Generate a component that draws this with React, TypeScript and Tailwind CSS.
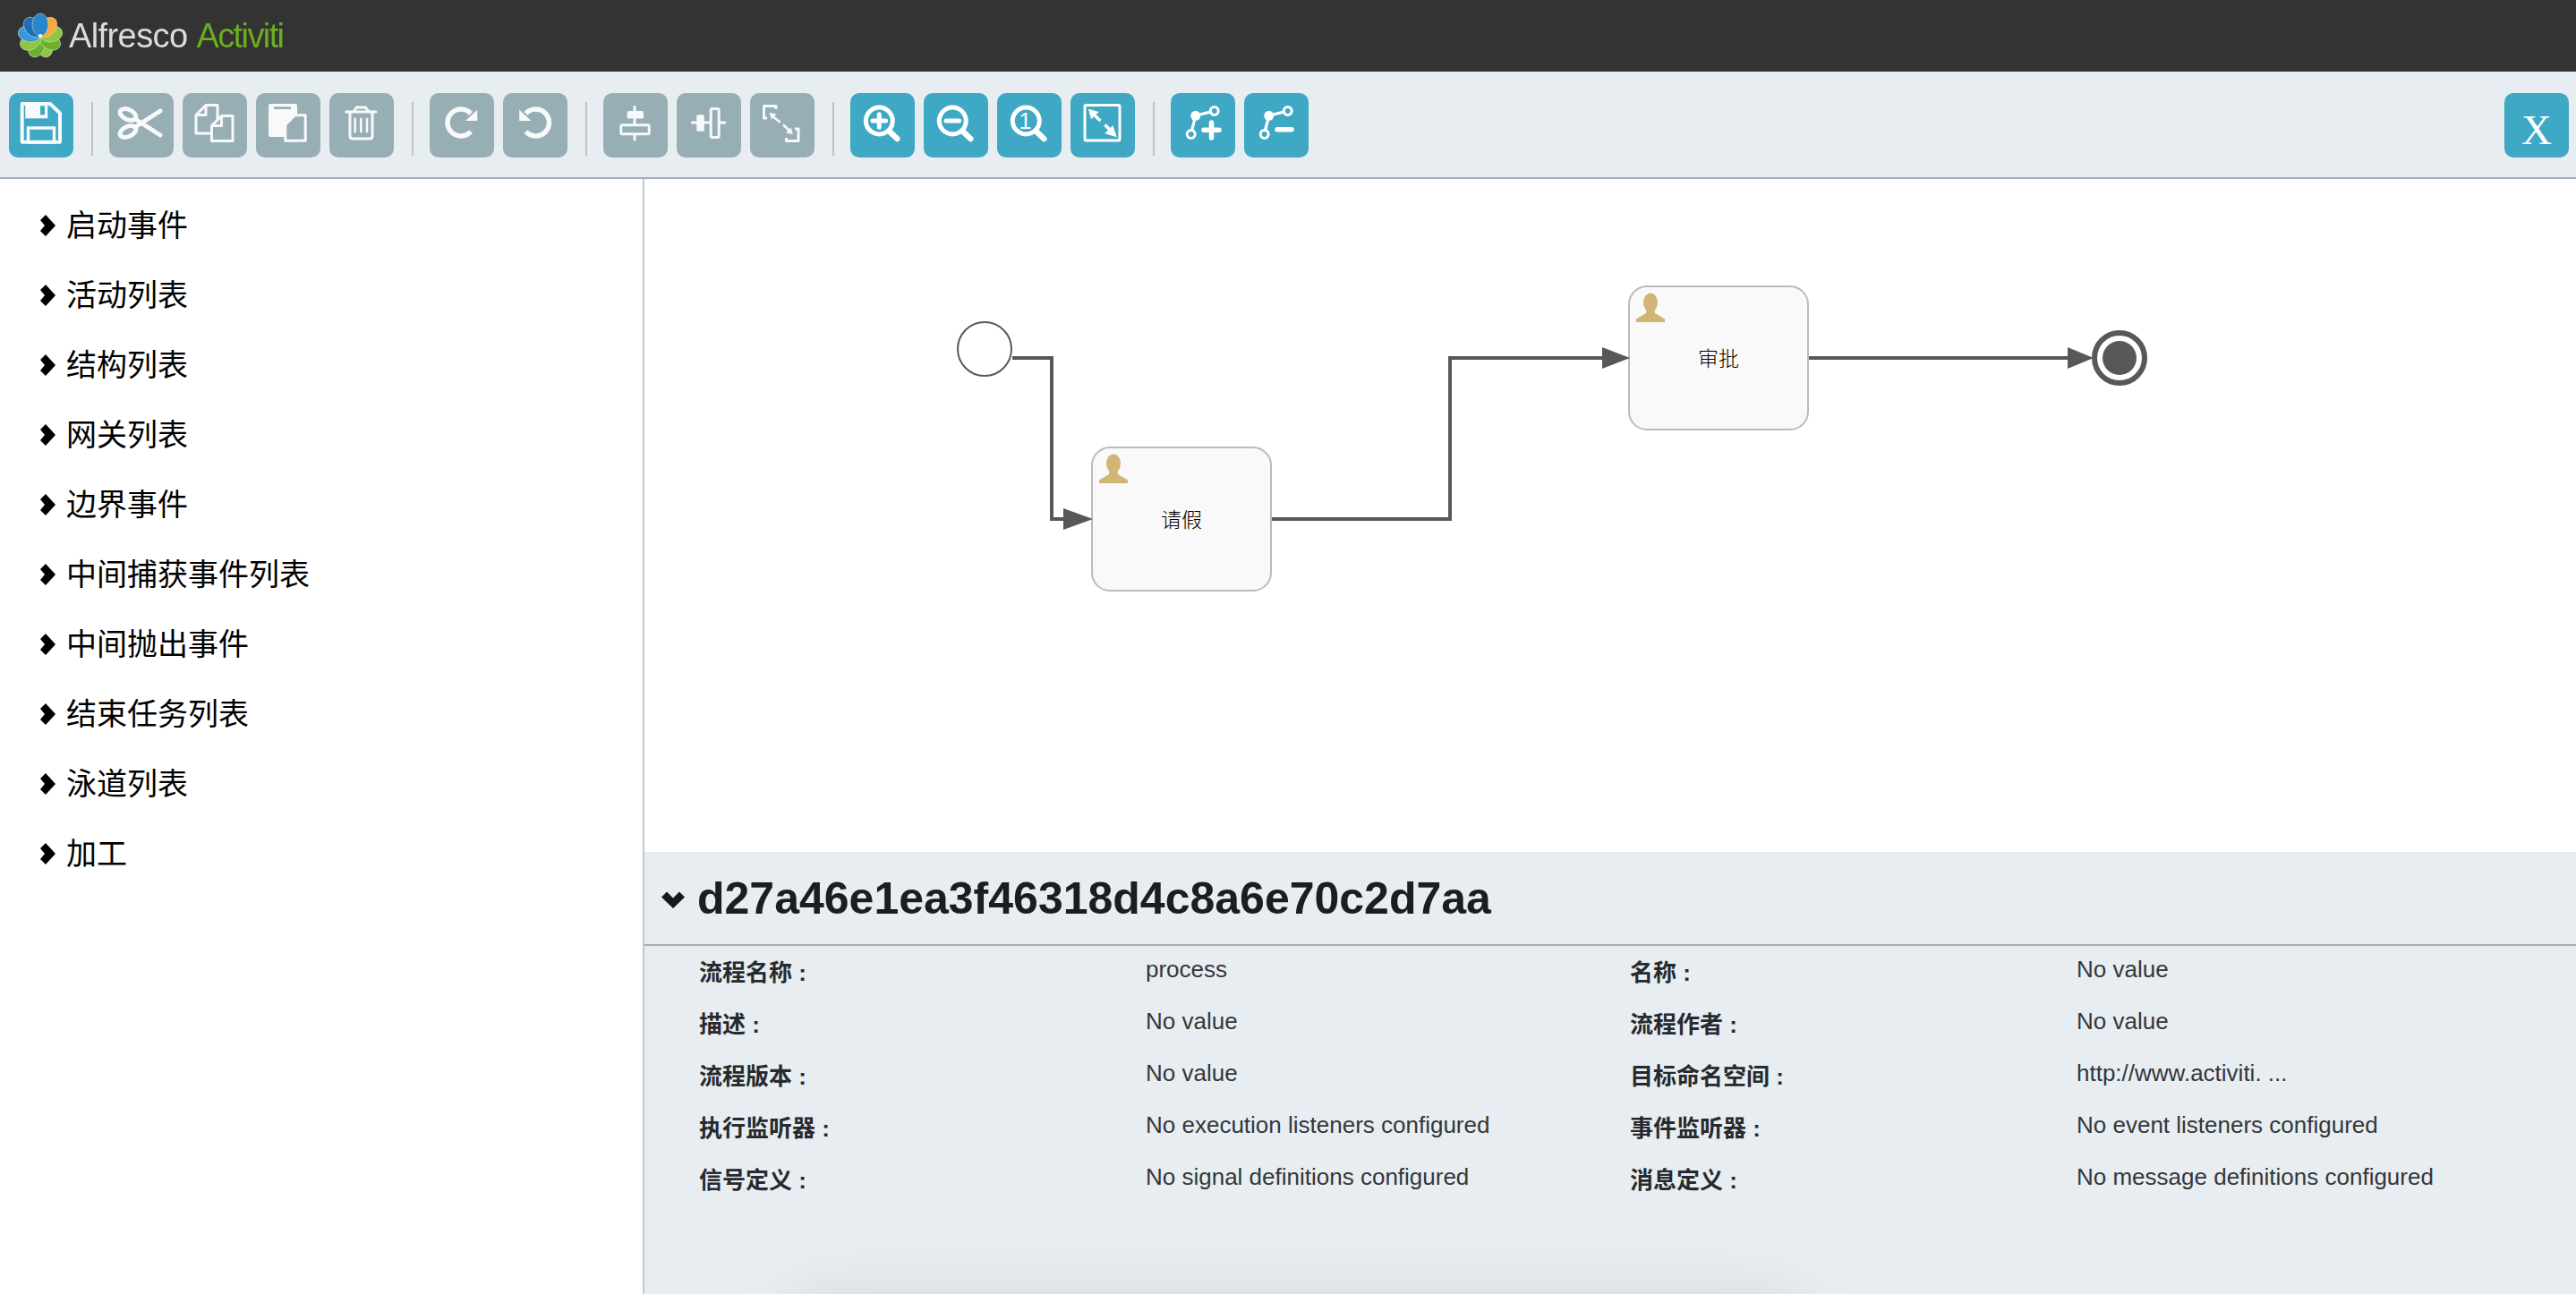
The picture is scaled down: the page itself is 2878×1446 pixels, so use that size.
import React from 'react';

const W = '#f7f9fb';
const BG = '#97aeb4';
const BLUE = '#3fa8c4';

const Btn: React.FC<{ blue?: boolean; children: React.ReactNode }> = ({ blue, children }) => (
  <button className={`w-[72px] h-[72px] shrink-0 rounded-[10px] ${blue ? 'bg-[#3fa8c4]' : 'bg-[#97aeb4]'}`}>
    <svg viewBox="0 0 72 72" className="w-[72px] h-[72px] block">
      {children}
    </svg>
  </button>
);

const Sep = () => <div className="w-[2px] h-[60px] mt-[10px] ml-5 mr-[18px] bg-[#bcc2cd] shrink-0" />;

const Glass = ({ children }: { children?: React.ReactNode }) => (
  <g>
    <circle cx="32.3" cy="31" r="15" fill="none" stroke="white" strokeWidth="5" />
    <path d="M43.5 42.7L52.3 51" stroke="white" strokeWidth="6.5" strokeLinecap="round" />
    {children}
  </g>
);

const Bend = ({ children }: { children: React.ReactNode }) => (
  <g>
    <path d="M27.7 25.3L46 20.6M27.7 25.3L23.2 43" stroke="white" strokeWidth="3.2" />
    <circle cx="27.7" cy="25.3" r="5.5" fill="white" />
    <circle cx="48.7" cy="20" r="4.5" fill="none" stroke="white" strokeWidth="3" />
    <circle cx="22.7" cy="46" r="4.5" fill="none" stroke="white" strokeWidth="3" />
    {children}
  </g>
);

const Logo = () => {
  const petals = [
    { a: 160, c: '#8ec63f' },
    { a: 200, c: '#6ab02e' },
    { a: 120, c: '#6ab02e' },
    { a: 240, c: '#8ec63f' },
    { a: 80, c: '#8ec63f' },
    { a: 40, c: '#f7a93b' },
    { a: 280, c: '#3a9ad9' },
    { a: 320, c: '#1f6db5' },
    { a: 0, c: '#2a86cc' },
  ];
  return (
    <svg viewBox="0 0 52 52" className="w-[52px] h-[52px] shrink-0">
      {petals.map((p, i) => (
        <ellipse key={i} cx="26" cy="13.5" rx="9" ry="12.5" fill={p.c} stroke="#dfe9e4" strokeWidth="0.5" transform={`rotate(${p.a} 26 26)`} />
      ))}
      <circle cx="26" cy="26" r="2" fill="white" />
    </svg>
  );
};

const Chevron = () => (
  <svg viewBox="0 0 17 24" className="w-[17px] h-[24px] shrink-0">
    <path d="M0 6L6 0L17 12L6 24L0 18L5 12Z" fill="#000" />
  </svg>
);

const User = ({ x, y }: { x: number; y: number }) => (
  <g transform={`translate(${x} ${y})`} fill="#d1b574">
    <ellipse cx="24" cy="18" rx="8" ry="10.5" />
    <polygon points="8,40 8,36.5 19,30 20,24 28,24 29,30 40,36.5 40,40" />
  </g>
);

const groups = ['启动事件', '活动列表', '结构列表', '网关列表', '边界事件', '中间捕获事件列表', '中间抛出事件', '结束任务列表', '泳道列表', '加工'];

const props = [
  ['流程名称 :', 'process', '名称 :', 'No value'],
  ['描述 :', 'No value', '流程作者 :', 'No value'],
  ['流程版本 :', 'No value', '目标命名空间 :', 'http://www.activiti. ...'],
  ['执行监听器 :', 'No execution listeners configured', '事件监听器 :', 'No event listeners configured'],
  ['信号定义 :', 'No signal definitions configured', '消息定义 :', 'No message definitions configured'],
];

export default function App() {
  return (
    <div className="w-[2878px] h-[1446px] overflow-hidden flex flex-col bg-white font-['Liberation_Sans','Noto_Sans_CJK_SC',sans-serif]">
      <div className="h-[80px] shrink-0 bg-[#333333] flex items-center pl-[19px]">
        <div className="flex items-center blur-[0.6px]">
          <Logo />
          <span className="ml-[6px] text-[38px] tracking-[-0.6px] text-[#dcdcdc]">Alfresco</span>
          <span className="ml-[10px] text-[38px] tracking-[-1.6px] text-[#6cae1f]">Activiti</span>
        </div>
      </div>

      <div className="h-[120px] shrink-0 bg-[#e8edf1] border-b-2 border-[#a5aeb9] flex items-start pt-6 pl-[10px] pr-2">
        <Btn blue>
          <path d="M14.7 12H46L57 22.5V54.7H14.7Z" fill="none" stroke={W} strokeWidth="4" strokeLinejoin="round" />
          <rect x="18.3" y="10" width="25" height="18.3" fill={W} />
          <rect x="35" y="14.3" width="5" height="10" fill={BLUE} />
          <rect x="21.5" y="39" width="29" height="16" fill="none" stroke={W} strokeWidth="3.5" />
        </Btn>
        <Sep />
        <div className="flex gap-[10px]">
          <Btn>
            <g fill="none" stroke={W}>
              <ellipse cx="21" cy="24" rx="9.5" ry="5.5" strokeWidth="5" transform="rotate(25 21 24)" />
              <ellipse cx="21" cy="43" rx="9.5" ry="5.5" strokeWidth="5" transform="rotate(-25 21 43)" />
              <path d="M29 29L57 47M29 38L57 20" strokeWidth="5" strokeLinecap="round" />
            </g>
          </Btn>
          <Btn>
            <g fill={BG} stroke={W} strokeWidth="3" strokeLinejoin="round">
              <path d="M26 13.5H39V45H15V24.5Z" />
              <path d="M26 13.5V24.5H15" fill="none" />
              <path d="M43.5 25.5H56V53.5H32.5V36.5Z" />
              <path d="M43.5 25.5V36.5H32.5" fill="none" />
            </g>
          </Btn>
          <Btn>
            <rect x="14" y="12" width="32" height="37" rx="2" fill={W} />
            <rect x="20" y="15.3" width="19" height="2.7" fill={BG} />
            <path d="M43.5 24.8H55.2V53.2H32.8V35.5Z" fill={BG} stroke={W} strokeWidth="3" strokeLinejoin="round" />
          </Btn>
          <Btn>
            <g fill="none" stroke={W} strokeWidth="3" strokeLinejoin="round">
              <path d="M18.7 21H52" strokeLinecap="round" />
              <path d="M27 21L30.3 16H40.3L44.3 21" />
              <path d="M23 21V48C23 50 24 51 26 51H45C47 51 48 50 48 48V21" />
              <path d="M28.7 27.7V44.3M35.3 27.7V44.3M42 27.7V44.3" strokeWidth="2.6" />
            </g>
          </Btn>
        </div>
        <Sep />
        <div className="flex gap-[10px]">
          <Btn>
            <path d="M46 22.8A15 15 0 1 0 46 43.2" fill="none" stroke={W} strokeWidth="5.5" />
            <polygon points="53.3,18.7 53.3,31 40,31" fill={W} />
          </Btn>
          <Btn>
            <g transform="translate(71.5 0) scale(-1 1)">
              <path d="M46 22.8A15 15 0 1 0 46 43.2" fill="none" stroke={W} strokeWidth="5.5" />
              <polygon points="53.3,18.7 53.3,31 40,31" fill={W} />
            </g>
          </Btn>
        </div>
        <Sep />
        <div className="flex gap-[10px]">
          <Btn>
            <path d="M35 15.3V52" stroke={W} strokeWidth="3" strokeLinecap="round" />
            <rect x="26.7" y="20" width="18.3" height="8.5" rx="1.5" fill={W} />
            <rect x="19.8" y="35.8" width="31.4" height="10" rx="1.5" fill={BG} stroke={W} strokeWidth="3" />
          </Btn>
          <Btn>
            <path d="M17.3 33H54" stroke={W} strokeWidth="3" strokeLinecap="round" />
            <rect x="22.3" y="24.3" width="8.5" height="18.4" rx="1.5" fill={W} />
            <rect x="38.2" y="17.5" width="9" height="32" rx="1.5" fill={BG} stroke={W} strokeWidth="3" />
          </Btn>
          <Btn>
            <g fill="none" stroke={W} strokeWidth="3" strokeLinejoin="round">
              <path d="M29 18V14.5H15.5V28H19" />
              <path d="M40.5 50V53.5H54V40H50" />
              <path d="M26 26.5L33.7 32.7M37 35.3L44 42" strokeWidth="2.6" />
            </g>
            <polygon points="21.5,22 29.5,23.5 24,29.5" fill={W} />
            <polygon points="48,46 40,44.5 45.5,38.5" fill={W} />
          </Btn>
        </div>
        <Sep />
        <div className="flex gap-[10px]">
          <Btn blue>
            <Glass>
              <path d="M25 31H39.6M32.3 23.7V38.3" stroke="white" strokeWidth="5" strokeLinecap="round" />
            </Glass>
          </Btn>
          <Btn blue>
            <Glass>
              <path d="M25 31H39.6" stroke="white" strokeWidth="5" strokeLinecap="round" />
            </Glass>
          </Btn>
          <Btn blue>
            <Glass>
              <text x="31.5" y="40" fontSize="25" fill="white" textAnchor="middle">1</text>
            </Glass>
          </Btn>
          <Btn blue>
            <rect x="16" y="13.5" width="39" height="39.5" rx="1.5" fill="none" stroke="white" strokeWidth="3" />
            <polygon points="20,17.7 31.7,21 23,29.3" fill="white" />
            <polygon points="51.7,49.3 38.3,45.3 47.3,36" fill="white" />
            <path d="M26 24L33.5 31M38.5 35.5L45 42" stroke="white" strokeWidth="3.5" />
          </Btn>
        </div>
        <Sep />
        <div className="flex gap-[10px]">
          <Btn blue>
            <Bend>
              <path d="M37 41.3H54M45.5 33V50" stroke="white" strokeWidth="5.5" strokeLinecap="round" />
            </Bend>
          </Btn>
          <Btn blue>
            <Bend>
              <path d="M37 40.7H53" stroke="white" strokeWidth="5.5" strokeLinecap="round" />
            </Bend>
          </Btn>
        </div>
        <button className="ml-auto w-[72px] h-[72px] rounded-[10px] bg-[#3fa8c4] text-white font-['Liberation_Serif',serif] text-[47px] leading-none pt-[10px]">X</button>
      </div>

      <div className="flex-1 flex min-h-0">
        <ul className="w-[720px] shrink-0 border-r-2 border-[#c3c8ce] pt-[13px] pl-[45px]">
          {groups.map((g) => (
            <li key={g} className="h-[78px] flex items-center gap-3 text-[34px] text-black">
              <Chevron />
              <span>{g}</span>
            </li>
          ))}
        </ul>

        <div className="flex-1 flex flex-col min-w-0">
          <div className="h-[752px] shrink-0 bg-white">
            <svg viewBox="720 200 2158 752" className="w-[2158px] h-[752px] block">
              <g fill="none" stroke="#585858" strokeWidth="4">
                <path d="M1131 400H1175V580H1195" />
                <path d="M1420 580H1620V400H1795" />
                <path d="M2020 400H2315" />
              </g>
              <rect x="1220" y="500" width="200" height="160" rx="20" fill="#f9f9f9" stroke="#bbbbbb" strokeWidth="2" />
              <rect x="1820" y="320" width="200" height="160" rx="20" fill="#f9f9f9" stroke="#bbbbbb" strokeWidth="2" />
              <g fill="#585858">
                <polygon points="1188,568 1221,580 1188,592" />
                <polygon points="1790,388 1821,400 1790,412" />
                <polygon points="2310,388 2339,400 2310,412" />
              </g>
              <circle cx="1100" cy="390" r="30" fill="#fff" stroke="#585858" strokeWidth="2" />
              <circle cx="2368" cy="400" r="28" fill="#fff" stroke="#585858" strokeWidth="6" />
              <circle cx="2368" cy="400" r="19" fill="#585858" />
              <User x={1220} y={500} />
              <User x={1820} y={320} />
              <text x="1320" y="589" fontSize="23" fontWeight="300" fill="#000" textAnchor="middle">请假</text>
              <text x="1920" y="409" fontSize="23" fontWeight="300" fill="#000" textAnchor="middle">审批</text>
            </svg>
          </div>

          <div className="relative flex-1 bg-[#e8edf1] overflow-hidden">
            <div className="h-[105px] border-b-2 border-[#a5aeb9] flex items-center pl-[19px] gap-[14px]">
              <svg viewBox="0 0 26 19" className="w-[26px] h-[19px] shrink-0 mt-[4px]">
                <path d="M0 6.5L6 0.5L13 7.5L20 0.5L26 6.5L13 19Z" fill="#16191c" />
              </svg>
              <h2 className="text-[50px] font-bold leading-none text-[#1b1e21]">d27a46e1ea3f46318d4c8a6e70c2d7aa</h2>
            </div>
            <div className="pl-[61px] pt-[1px]">
              {props.map((r) => (
                <div key={r[0]} className="grid grid-cols-[499px_541px_499px_1fr] h-[58px] items-center">
                  <span className="text-[26px] font-bold text-[#262a2e]">{r[0]}</span>
                  <span className="text-[26px] text-[#33373b] pb-[8px]">{r[1]}</span>
                  <span className="text-[26px] font-bold text-[#262a2e]">{r[2]}</span>
                  <span className="text-[26px] text-[#33373b] pb-[8px]">{r[3]}</span>
                </div>
              ))}
            </div>
            <div className="absolute left-[170px] top-[508px] w-[1115px] h-[60px] shadow-[0_0_80px_rgba(0,0,0,0.13)]" />
          </div>
        </div>
      </div>
    </div>
  );
}
